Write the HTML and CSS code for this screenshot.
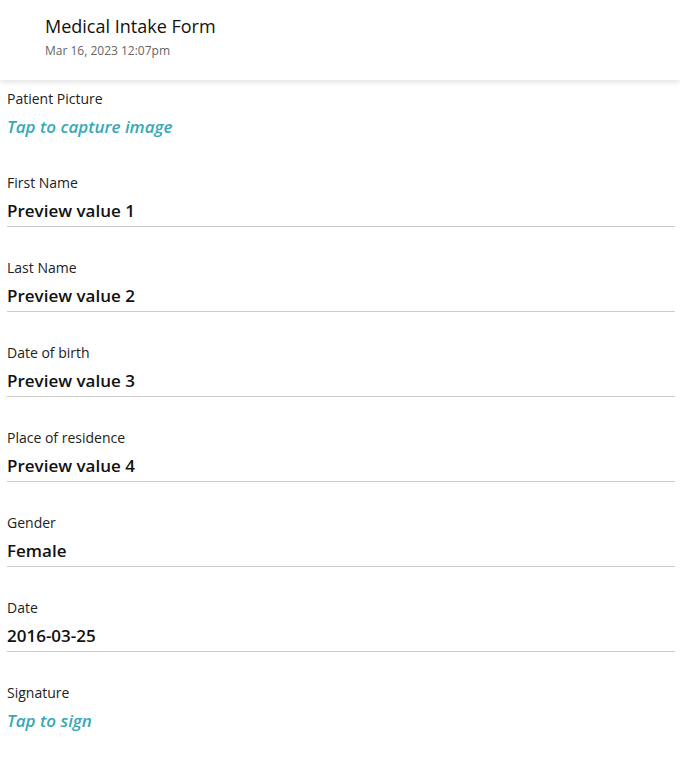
FILE: index.html
```html
<!DOCTYPE html>
<html lang="en">
<head>
    <meta charset="UTF-8">
    <meta name="viewport" content="width=device-width, initial-scale=1.0">
    <title>Medical Intake Form</title>
    <link rel="stylesheet" href="styles.css">
</head>
<body>
    <header class="form-header">
        <h1 class="form-title">Medical Intake Form</h1>
        <div class="form-date">Mar 16, 2023 12:07pm</div>
    </header>

    <div class="form-body">
        <div class="field field-action">
            <div class="field-label">Patient Picture</div>
            <div class="field-tap">Tap to capture image</div>
        </div>
        <div class="field">
            <div class="field-label">First Name</div>
            <div class="field-value">Preview value 1</div>
        </div>
        <div class="field">
            <div class="field-label">Last Name</div>
            <div class="field-value">Preview value 2</div>
        </div>
        <div class="field">
            <div class="field-label">Date of birth</div>
            <div class="field-value">Preview value 3</div>
        </div>
        <div class="field">
            <div class="field-label">Place of residence</div>
            <div class="field-value">Preview value 4</div>
        </div>
        <div class="field">
            <div class="field-label">Gender</div>
            <div class="field-value">Female</div>
        </div>
        <div class="field">
            <div class="field-label">Date</div>
            <div class="field-value">2016-03-25</div>
        </div>
        <div class="field field-action">
            <div class="field-label">Signature</div>
            <div class="field-tap">Tap to sign</div>
        </div>
    </div>
</body>
</html>
```

FILE: styles.css
```css
body {
    margin: 0;
    font-family: 'Open Sans', 'Noto Sans', Arial, sans-serif;
    color: #1a1a1a;
    background-color: white;
}

.form-header {
    height: 80px;
    padding: 14px 0 0 45px;
    box-sizing: border-box;
    background-color: white;
    box-shadow: 0 2px 6px rgba(0,0,0,0.12);
}

.form-title {
    margin: 0;
    font-size: 18px;
    font-weight: normal;
    line-height: 24px;
    color: #111;
}

.form-date {
    margin-top: 3px;
    font-size: 12px;
    line-height: 20px;
    color: #666;
}

.form-body {
    padding: 9px 5px 0 7px;
}

.field {
    padding-bottom: 3px;
    margin-bottom: 31px;
    border-bottom: 1px solid #cccccc;
}

.field-action {
    border-bottom: none;
}

.field-label {
    font-size: 14px;
    line-height: 20px;
    color: #222;
    margin-bottom: 6px;
}

.field-value {
    font-size: 17px;
    font-weight: 600;
    line-height: 24px;
    color: #111;
}

.field-tap {
    font-size: 17px;
    font-weight: 600;
    font-style: italic;
    line-height: 24px;
    color: #36a9b6;
}
```
